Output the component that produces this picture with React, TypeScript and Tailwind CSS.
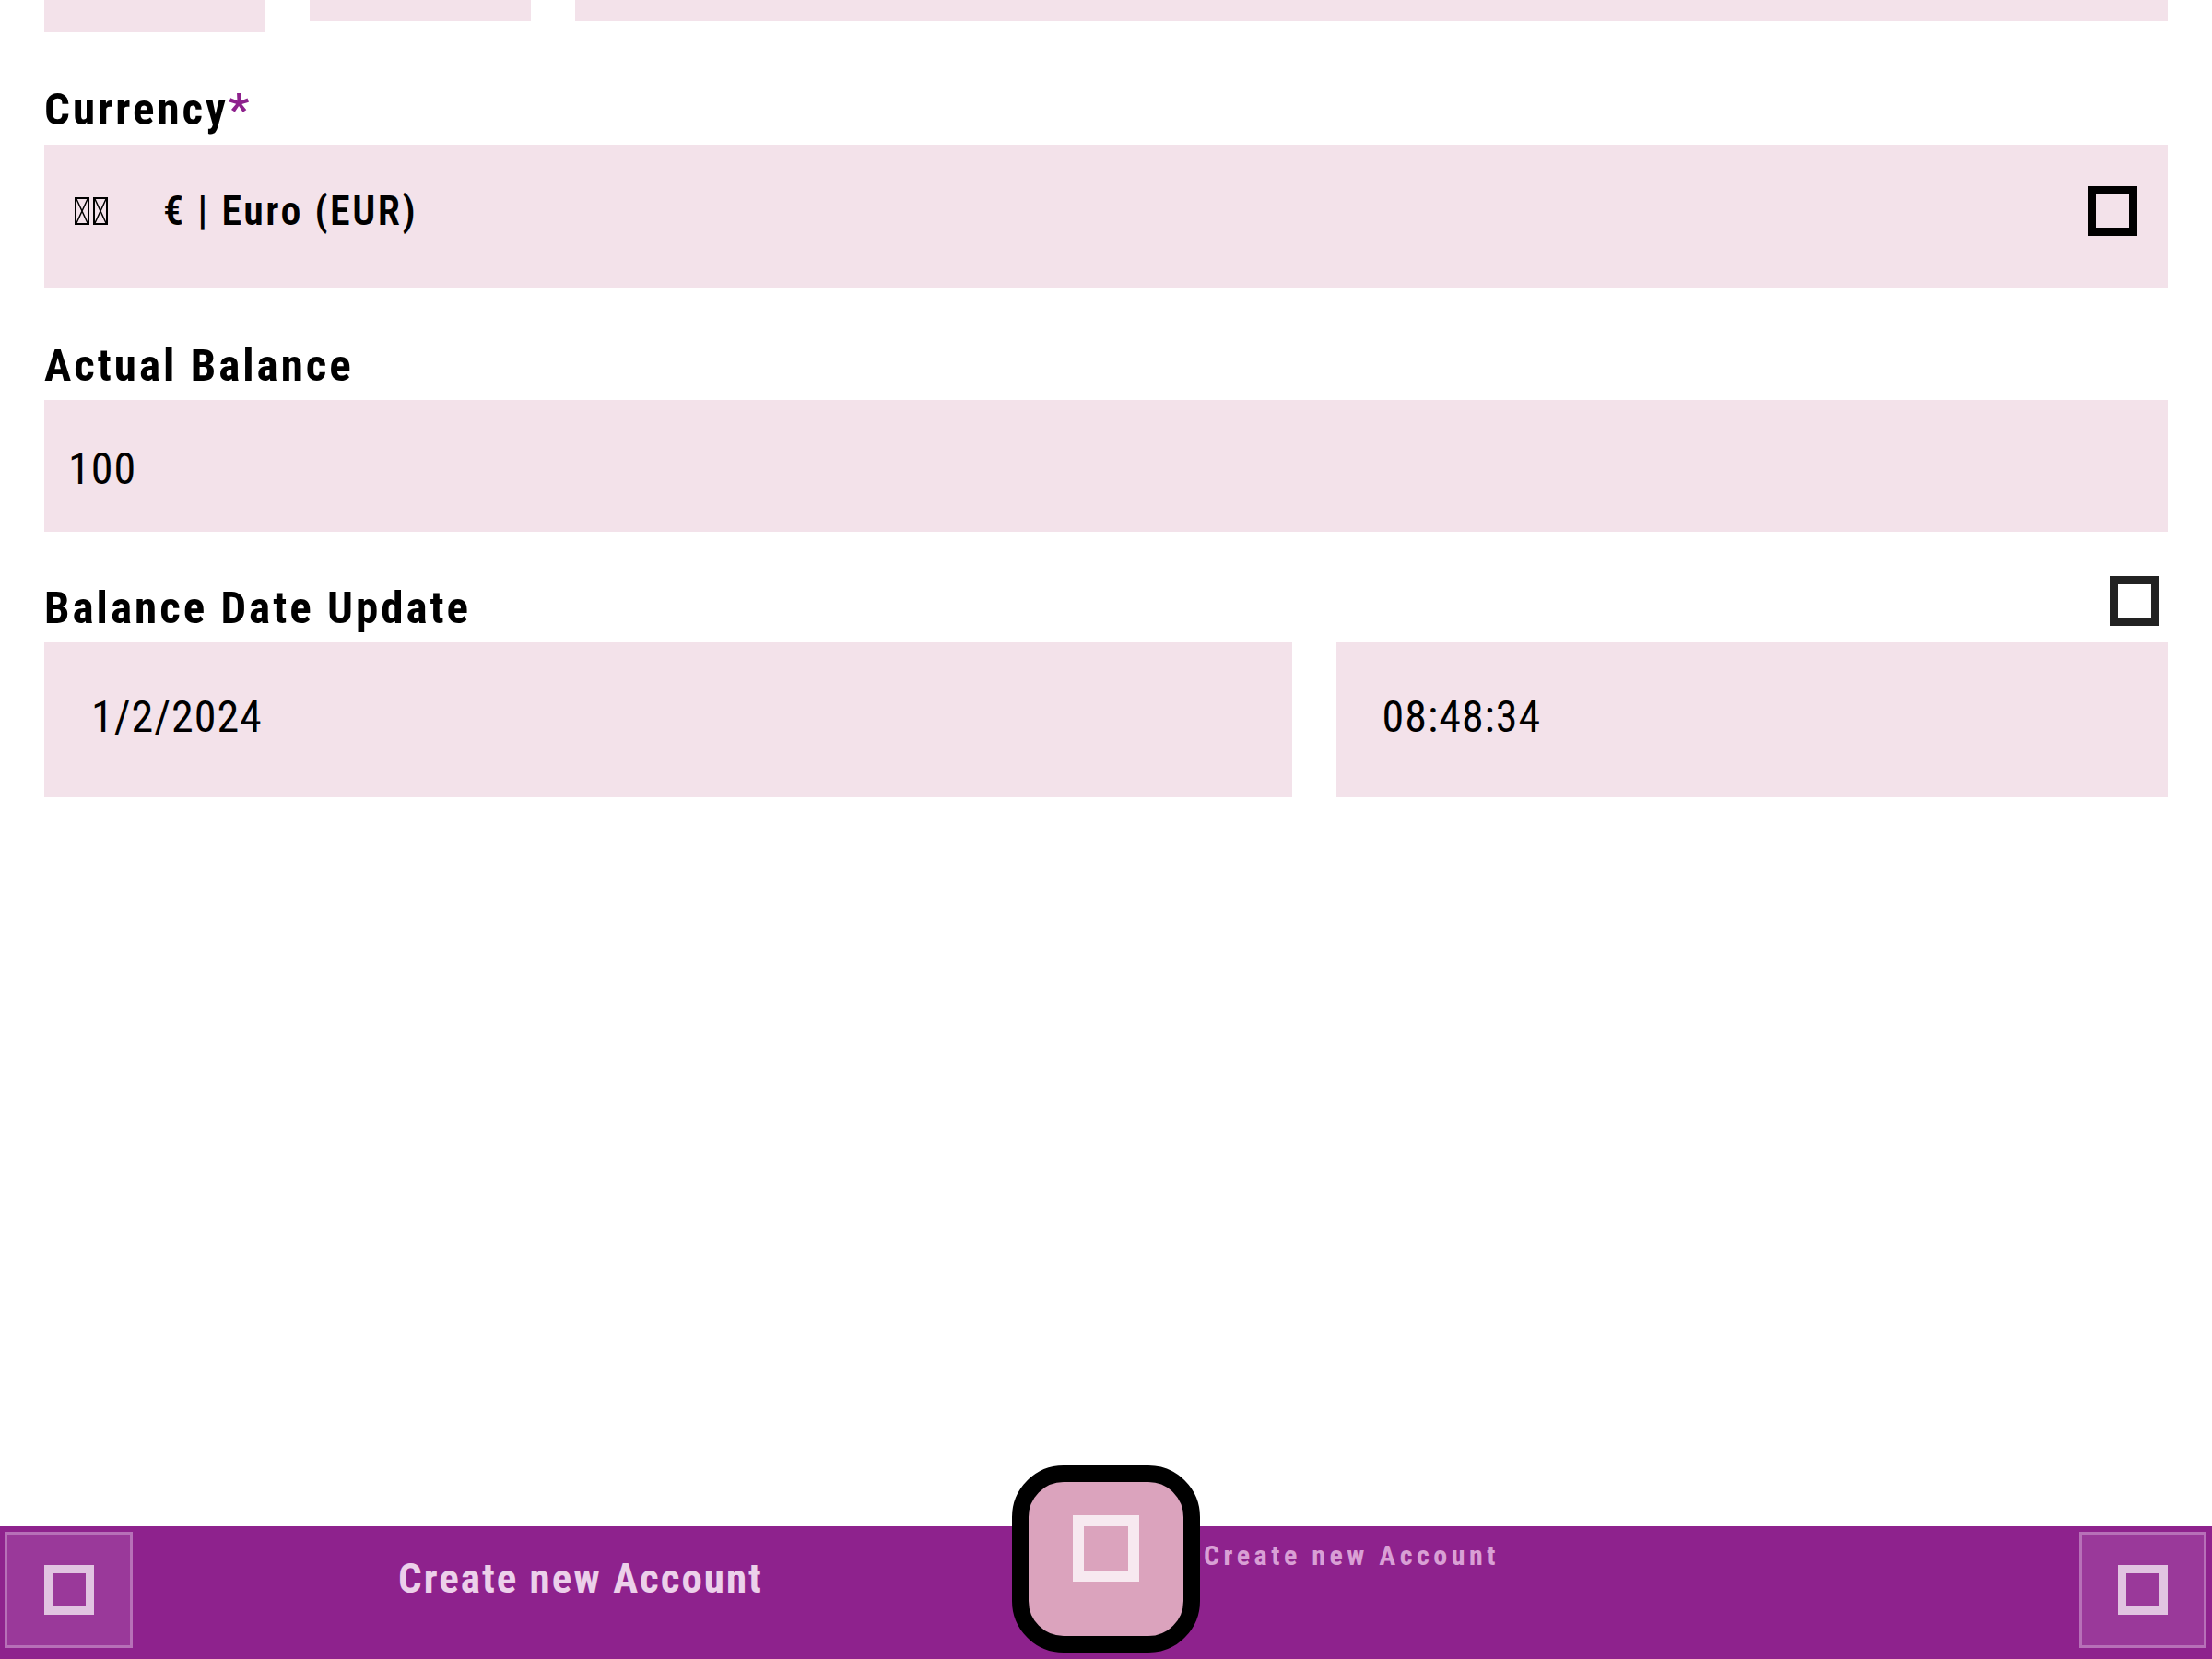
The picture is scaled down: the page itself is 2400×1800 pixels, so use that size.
import React from 'react';

const Square: React.FC<{ size: number; stroke: number; color: string }> = ({ size, stroke, color }) => (
    <svg width={size} height={size} viewBox={`0 0 ${size} ${size}`} className="block shrink-0">
        <rect x={stroke / 2} y={stroke / 2} width={size - stroke} height={size - stroke} fill="none" stroke={color} strokeWidth={stroke} />
    </svg>
);

const Tofu = () => (
    <svg width="16" height="30" viewBox="0 0 16 30" className="block shrink-0">
        <rect x="1" y="1" width="14" height="28" fill="none" stroke="#000" strokeWidth="2" />
        <path d="M2 2 L14 28 M14 2 L2 28" stroke="#000" strokeWidth="1.5" />
    </svg>
);

const Label: React.FC<{ children: React.ReactNode; className?: string }> = ({ children, className = '' }) => (
    <div className={`text-[49px] font-bold leading-[56px] tracking-[3px] ${className}`}>{children}</div>
);

export default function App() {
    return (
        <div className="h-screen flex flex-col bg-white text-black overflow-hidden font-['Roboto_Condensed',Roboto,sans-serif] font-stretch-condensed">
            <div className="flex-1 px-[48px]">
                {/* bottoms of the row scrolled above */}
                <div className="flex items-start gap-[48px]">
                    <div className="w-[240px] h-[35px] bg-[#f3e2ea]" />
                    <div className="w-[240px] h-[23px] bg-[#f3e2ea]" />
                    <div className="flex-1 h-[23px] bg-[#f3e2ea]" />
                </div>

                <Label className="mt-[56px]">
                    Currency<span className="text-[#8e228d]">*</span>
                </Label>
                <div className="mt-[10px] h-[155px] bg-[#f3e2ea] flex items-center pl-[33px] pr-[33px] pb-[12px]">
                    <div className="flex gap-[4px]">
                        <Tofu />
                        <Tofu />
                    </div>
                    <span className="ml-[60px] text-[44px] font-semibold tracking-[2.5px]">€ | Euro (EUR)</span>
                    <div className="ml-auto">
                        <Square size={54} stroke={9} color="#000" />
                    </div>
                </div>

                <Label className="mt-[57px]">Actual Balance</Label>
                <div className="mt-[9px] h-[143px] bg-[#f3e2ea] flex items-center pl-[26px] pt-[6px]">
                    <span className="text-[48px] tracking-[1px]">100</span>
                </div>

                <div className="mt-[48px] flex items-end justify-between">
                    <Label>Balance Date Update</Label>
                    <div className="mb-[9px] mr-[9px]">
                        <Square size={54} stroke={9} color="#222" />
                    </div>
                </div>
                <div className="mt-[9px] grid grid-cols-[3fr_2fr] gap-[48px]">
                    <div className="h-[168px] bg-[#f3e2ea] flex items-center pl-[51px] pb-[6px]">
                        <span className="text-[48px] tracking-[1px]">1/2/2024</span>
                    </div>
                    <div className="h-[168px] bg-[#f3e2ea] flex items-center pl-[50px] pb-[6px]">
                        <span className="text-[48px] tracking-[1px]">08:48:34</span>
                    </div>
                </div>
            </div>

            <div className="relative h-[144px] bg-[#8e228d] flex items-start pt-[6px] pl-[5px] pr-[6px]">
                <button className="w-[139px] h-[126px] border-[3px] border-[#b770b8] bg-[#9a399a] flex items-center justify-center">
                    <Square size={54} stroke={9} color="#e1c4e1" />
                </button>
                <div className="flex-1 h-[126px] flex items-center justify-center pl-[12px] pb-[24px]">
                    <span className="text-[45px] font-bold tracking-[2px] text-[#ecd0ea]">Create new Account</span>
                </div>
                <div className="w-[204px] shrink-0" />
                <div className="flex-1" />
                <button className="w-[138px] h-[126px] border-[3px] border-[#b770b8] bg-[#9a399a] flex items-center justify-center">
                    <Square size={54} stroke={9} color="#e1c4e1" />
                </button>

                <div className="absolute left-1/2 -translate-x-1/2 top-[-66px] w-[204px] h-[203px] rounded-[56px] border-[18px] border-black bg-[#dba3bd] flex items-start justify-center pt-[36px]">
                    <Square size={72} stroke={12} color="#f7e9f0" />
                </div>
                <span className="absolute left-[1306px] top-[14px] text-[30px] leading-[36px] font-bold tracking-[4.5px] text-[#d9a0d5]">Create new Account</span>
            </div>
        </div>
    );
}
